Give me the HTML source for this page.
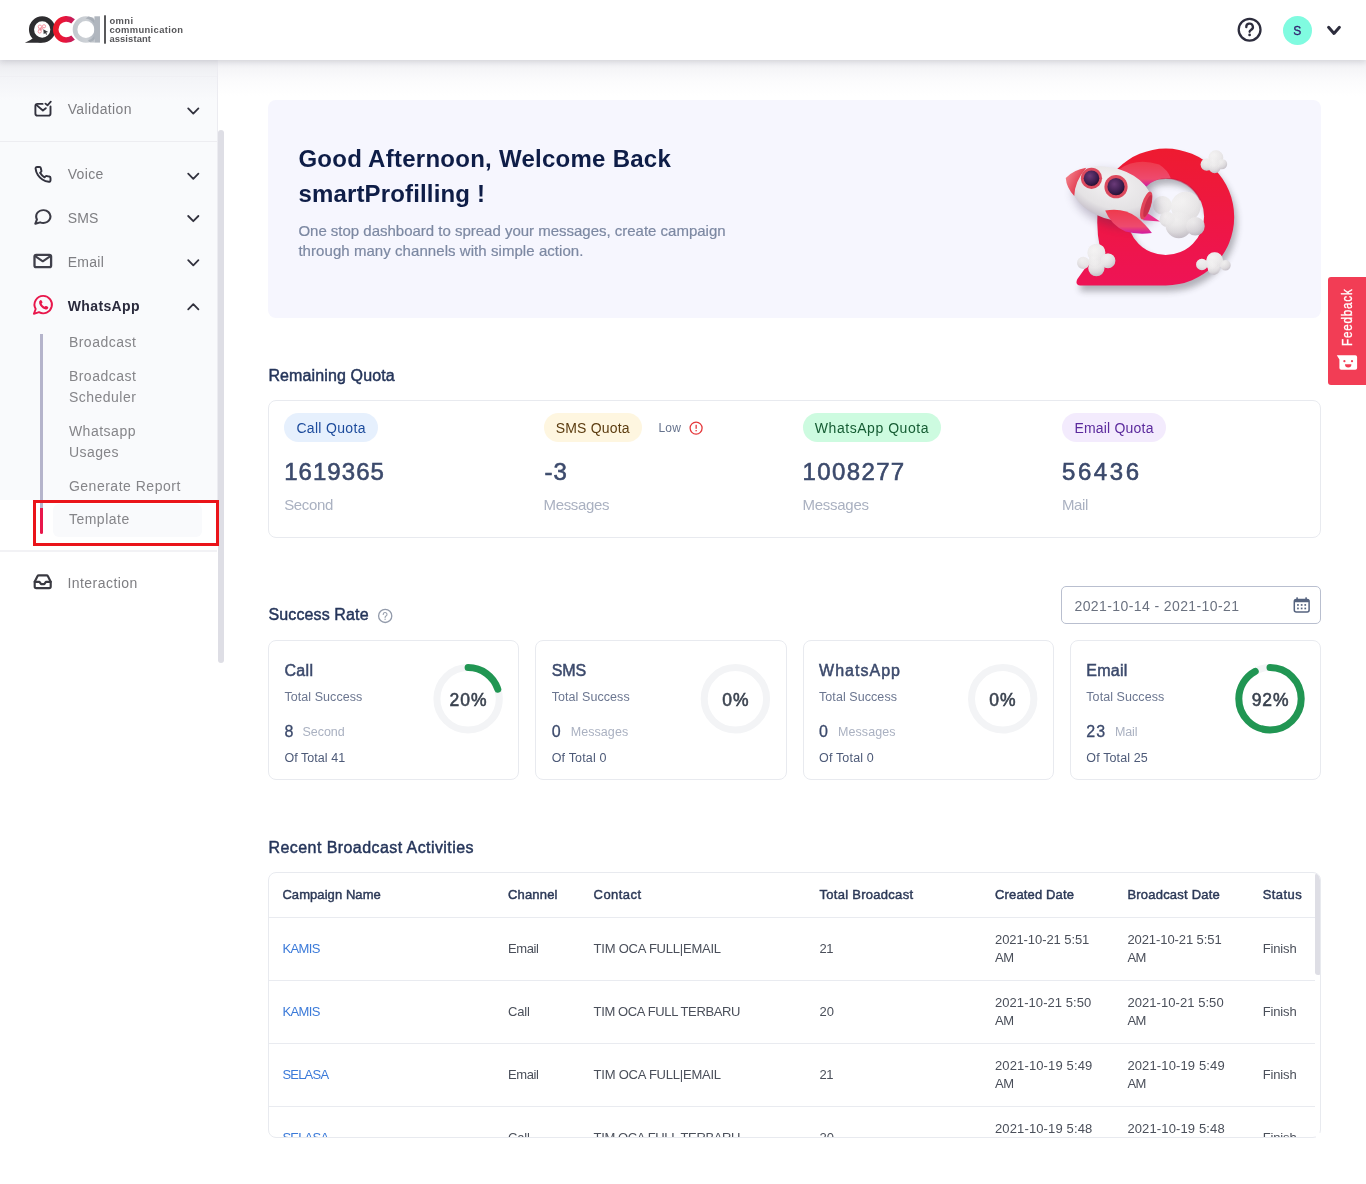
<!DOCTYPE html>
<html lang="en">
<head>
<meta charset="utf-8">
<title>OCA - Omni Communication Assistant</title>
<style>
*{box-sizing:border-box;margin:0;padding:0}
html,body{width:1366px;height:1184px;overflow:hidden;background:#fff}
body{font-family:"Liberation Sans",Arial,sans-serif;color:#2d3a5a;position:relative;font-size:14px}
.t{position:absolute;z-index:4;white-space:nowrap;line-height:1}
svg{position:absolute;overflow:visible}
/* header */
#hdr{position:absolute;left:0;top:0;width:1366px;height:60px;background:#fff;box-shadow:0 2px 6px rgba(30,30,50,.14);z-index:10}
#hdr .t{z-index:11}
#hdrshade{position:absolute;left:0;top:60px;width:1366px;height:36px;background:linear-gradient(#f1f1f4,#fbfbfc 55%,#fff);z-index:1}
#avatar{position:absolute;left:1282.8px;top:15.8px;width:29.4px;height:29.4px;border-radius:50%;background:#80fbe0;z-index:11}
/* sidebar */
#side{position:absolute;left:0;top:60px;width:218px;height:440px;background:#f9fafc;border-right:1px solid #ececf1;z-index:2}
#sideshade{position:absolute;left:0;top:60px;width:217px;height:40px;background:linear-gradient(#ebebef,#f3f4f7 42%,#f9fafc);z-index:3}
.sdiv{position:absolute;left:0;width:217px;height:1px;background:#ededf1;z-index:3}
#tree{position:absolute;left:40px;top:334px;width:3px;height:174px;background:#b5b4cb;z-index:4}
#treeact{position:absolute;left:40px;top:508px;width:3px;height:26px;background:#e8174b;border-radius:0 0 2px 2px;z-index:4}
#tplhl{position:absolute;left:53px;top:503.5px;width:149px;height:33.5px;border-radius:6px;background:#f9fafc;z-index:3}
#redbox{position:absolute;left:33px;top:500px;width:186px;height:46px;border:3px solid #ea141a;z-index:6}
#sbar{position:absolute;left:218px;top:130px;width:6px;height:532.5px;border-radius:3px;background:#dedee5;z-index:5}
/* main */
#banner{position:absolute;left:268px;top:100px;width:1053px;height:218px;border-radius:8px;background:#f6f6fe;z-index:2}
.card{position:absolute;border:1px solid #e8eaef;border-radius:8px;background:#fff;z-index:2}
.pill{position:absolute;top:413px;height:29px;border-radius:15px;z-index:3}
#date{position:absolute;left:1061px;top:586px;width:260px;height:37.5px;border:1px solid #b9bfcf;border-radius:5px;background:#fff;z-index:3}
#tbl{position:absolute;left:268px;top:872px;width:1053px;height:266px;border:1px solid #e8eaef;border-radius:8px;background:#fff;z-index:2;overflow:hidden}
#tbl .ln{position:absolute;left:0;width:1046px;height:1px;background:#e9ebf0}
#tbl .sb{position:absolute;left:1046px;top:0;width:5.5px;height:102px;border-radius:3px;background:#dedee5}
#fb{position:absolute;left:1328px;top:276.5px;width:38px;height:108.5px;background:#f23d55;border-radius:3px 0 0 3px;z-index:8}
#fbt{position:absolute;left:1339.8px;top:345.5px;width:60px;height:13px;transform-origin:0 0;transform:rotate(-90deg) scaleX(.78);font-size:15px;line-height:13px;color:#fff;white-space:nowrap;z-index:9;letter-spacing:1px;-webkit-text-stroke:.3px #fff}
</style>
</head>
<body>
<div id="wrap" style="position:absolute;left:0;top:0;width:1366px;height:1184px;will-change:transform">
<div id="hdr">
<svg id="logo" style="left:0;top:0;z-index:11" width="200" height="60" viewBox="0 0 200 60">
<defs>
<linearGradient id="gC" x1="0" y1="0" x2="1" y2="0"><stop offset="0" stop-color="#ea1a2b"/><stop offset=".5" stop-color="#e8153c"/><stop offset="1" stop-color="#c21d5c"/></linearGradient>
<linearGradient id="gA" x1="0" y1="0" x2="1" y2="0"><stop offset="0" stop-color="#c4c9cf"/><stop offset=".55" stop-color="#cdd1d6"/><stop offset="1" stop-color="#a7aeb8"/></linearGradient>
</defs>
<path d="M24.900 42.700 L42.200 42.700 L34.500 37 Q31 40.300 24.900 42.700z" fill="#2e2d30"/>
<circle cx="42.200" cy="29.500" r="10.700" fill="none" stroke="#2e2d30" stroke-width="5.100"/>
<g stroke="#f2798a" stroke-width=".75" fill="none"><circle cx="39.900" cy="26.700" r="1.700"/><circle cx="44" cy="26.300" r="1.600"/><circle cx="39.700" cy="31.500" r="1.600"/><circle cx="41.300" cy="29" r="1"/><path d="M41.500 29.200 L38.200 29.100 M42 28.500 L43.300 27.500"/></g>
<path d="M43.300 29.300 L48.200 32 L46.100 32.400 L47.100 34.300 L46.100 34.800 L45.200 32.900 L43.700 34.200z" fill="#3a393c"/>
<path d="M73.100 21.300 A10.600 10.600 0 1 0 73.100 37.600" fill="none" stroke="url(#gC)" stroke-width="5.600"/>
<circle cx="85.900" cy="29.500" r="10.850" fill="none" stroke="url(#gA)" stroke-width="4.700"/>
<path d="M85.500 18.600 L88.500 16.400 L93.500 17.800 L94.400 23.500 Q91 19 85.500 18.600z" fill="#a3a9b2" opacity=".8"/>
<path d="M88 40.300 Q92 39.500 94.400 36 L94.400 42.600 L90 42.600z" fill="#a3a9b2" opacity=".7"/>
<rect x="94.400" y="16.300" width="5.600" height="26.300" fill="#b0b6be"/>
<rect x="104" y="15.300" width="2" height="28.400" fill="#59595b"/>
</svg>
<svg style="left:1230px;top:10px;z-index:11" width="120" height="40" viewBox="1230 10 120 40">
<circle cx="1249.6" cy="29.7" r="10.9" fill="none" stroke="#2d2d3d" stroke-width="2.3"/>
<path d="M1246.3 27.2 A3.3 3.3 0 1 1 1251 29.900 Q1249.6 30.700 1249.6 31.800" fill="none" stroke="#2d2d3d" stroke-width="2.3" stroke-linecap="round"/>
<circle cx="1249.6" cy="34.900" r="1.35" fill="#2d2d3d"/>
<polyline points="1328.6,27.3 1334,33.4 1339.4,27.3" fill="none" stroke="#2d2d3d" stroke-width="3" stroke-linecap="round" stroke-linejoin="round"/>
</svg>
<div id="avatar"></div>
</div>
<div id="hdrshade"></div>
<div id="side"></div>
<div id="sideshade"></div>
<div class="sdiv" style="top:76px;background:#f0f0f4"></div>
<div class="sdiv" style="top:141px"></div>
<div class="sdiv" style="top:550px;height:2px;background:#f2f2f5"></div>
<div id="tree"></div><div id="treeact"></div>
<div id="tplhl"></div>
<div id="redbox"></div>
<div id="sbar"></div>
<svg style="left:0;top:60px;z-index:4" width="230" height="560" viewBox="0 60 230 560">
<g fill="none" stroke="#32323e" stroke-width="1.8" stroke-linecap="round" stroke-linejoin="round">
<polyline points="188.2,108.4 193.3,113.6 198.4,108.4"/><polyline points="188.2,173.6 193.3,178.79999999999998 198.4,173.6"/><polyline points="188.2,216.0 193.3,221.2 198.4,216.0"/><polyline points="188.2,260.2 193.3,265.40000000000003 198.4,260.2"/><polyline points="188.2,309.40000000000003 193.3,304.20000000000005 198.4,309.40000000000003"/></g>
<g fill="none" stroke="#32323e" stroke-width="2" stroke-linecap="round" stroke-linejoin="round">
<!-- validation -->
<path d="M42.600 103.900 H37.600 a2.200 2.200 0 0 0 -2.200 2.200 V113.400 a2.200 2.200 0 0 0 2.200 2.200 H48.300 a2.200 2.200 0 0 0 2.200 -2.200 V106.400" stroke-width="1.900"/>
<polyline points="36.300,104.900 42.900,110.500 45.800,108.200" stroke-width="1.900"/>
<polyline points="45.400,103.600 47.500,105.300 50.800,101.600" stroke-width="1.800"/>
<!-- voice -->
<g transform="translate(34.0,165.4) scale(.75)"><path stroke-width="2.6" d="M22 16.92v3a2 2 0 0 1-2.18 2 19.79 19.79 0 0 1-8.63-3.07 19.5 19.5 0 0 1-6-6 19.79 19.79 0 0 1-3.07-8.67A2 2 0 0 1 4.11 2h3a2 2 0 0 1 2 1.72 12.84 12.84 0 0 0 .7 2.81 2 2 0 0 1-.45 2.11L8.09 9.91a16 16 0 0 0 6 6l1.27-1.27a2 2 0 0 1 2.11-.45 12.84 12.84 0 0 0 2.81.7A2 2 0 0 1 22 16.92z"/></g>
<!-- sms -->
<g transform="translate(32.8,207.8) scale(.84,.76)" stroke="#3a3a45"><path stroke-width="2.5" d="M21 11.5a8.38 8.38 0 0 1-.9 3.8 8.5 8.5 0 0 1-7.6 4.7 8.38 8.38 0 0 1-3.8-.9L3 21l1.9-5.700a8.38 8.38 0 0 1-.9-3.8 8.500 8.500 0 0 1 4.7-7.6 8.38 8.38 0 0 1 3.8-.9h.5a8.48 8.48 0 0 1 8 8v.5z"/></g>
<!-- email -->
<rect x="34.5" y="254.8" width="16.6" height="12.4" rx="1.8" stroke="#40404b" stroke-width="2.300"/>
<polyline points="35.2,256.200 42.8,261.300 50.4,256.200" stroke="#40404b" stroke-width="2.100"/>
<!-- whatsapp -->
<path stroke="#e8174b" stroke-width="1.9" d="M43.3 295.9 a8.7 8.7 0 1 1 -4.3 16.3 L33.9 313.8 L35.7 309 A8.7 8.7 0 0 1 43.300 295.9z"/>
<path fill="#e8174b" stroke="none" d="M40.2 300.2 q.9-.5 1.400.4 l.8 1.500 q.3.700-.4 1.200 l-.5.500 q1 2 3 3 l.6-.600 q.5-.500 1.200-.2 l1.500.800 q.8.500.3 1.400 q-1 1.700-3.100 1 q-4.300-1.500-5.800-5.800 q-.6-2.100 1-3.200z"/>
<!-- interaction -->
<g transform="translate(33.100,572.2) scale(.8)" stroke="#3a3a42"><polyline stroke-width="2.7" points="22 12 16 12 14 15 10 15 8 12 2 12"/><path stroke-width="2.7" d="M5.45 5.11L2 12v6a2 2 0 0 0 2 2h16a2 2 0 0 0 2-2v-6l-3.45-6.890A2 2 0 0 0 16.76 4H7.24a2 2 0 0 0-1.79 1.110z"/></g>
</g>
</svg>
<div id="banner"></div>
<svg style="left:1040px;top:130px;z-index:3" width="220" height="180" viewBox="1040 130 220 180">
<defs>
<linearGradient id="rg" x1="0" y1="0" x2="0" y2="1"><stop offset="0" stop-color="#ee1b30"/><stop offset="1" stop-color="#ee1356"/></linearGradient>
<radialGradient id="cg" cx=".42" cy=".25" r=".85"><stop offset="0" stop-color="#f3f2f2"/><stop offset=".55" stop-color="#e4e2e3"/><stop offset="1" stop-color="#b9b3bd"/></radialGradient>
<radialGradient id="ch" cx=".4" cy=".3" r=".7"><stop offset="0" stop-color="#f7f6f6"/><stop offset=".7" stop-color="#eceaeb" stop-opacity=".6"/><stop offset="1" stop-color="#d5d1d6" stop-opacity="0"/></radialGradient>
<radialGradient id="bg" cx=".45" cy=".3" r=".75"><stop offset="0" stop-color="#f4f3f4"/><stop offset=".65" stop-color="#e4e2e4"/><stop offset="1" stop-color="#bdb6c2"/></radialGradient>
<radialGradient id="wg" cx=".4" cy=".35" r=".7"><stop offset="0" stop-color="#6a3a78"/><stop offset=".7" stop-color="#3a1c4c"/><stop offset="1" stop-color="#22102e"/></radialGradient>
<linearGradient id="fg" x1="0" y1="0" x2="0" y2="1"><stop offset="0" stop-color="#ee3a4c"/><stop offset=".7" stop-color="#ee4a6e"/><stop offset="1" stop-color="#d21aa0"/></linearGradient>
<linearGradient id="ng" x1="0" y1="0" x2="1" y2=".3"><stop offset="0" stop-color="#f58a93"/><stop offset="1" stop-color="#e23a4e"/></linearGradient>
<filter id="rs" x="-20%" y="-20%" width="150%" height="150%"><feGaussianBlur stdDeviation="3.2"/></filter>
<filter id="cs" x="-20%" y="-20%" width="140%" height="140%"><feGaussianBlur stdDeviation=".5"/></filter>
<filter id="bs" x="-30%" y="-30%" width="160%" height="160%"><feGaussianBlur stdDeviation="5"/></filter>
</defs>
<path d="M1097.4 217.0 A68.4 68.4 0 1 1 1165.8 285.4 L1080.3 285.6 Q1074.6 284.9 1077.4 279.0 L1099.9 247.6 Q1096.7 233.1 1097.4 217.0z M1127.3 216.6 A38.4 38.4 0 1 0 1204.1 216.6 A38.4 38.4 0 1 0 1127.3 216.6z" fill="#2a2a33" fill-rule="evenodd" opacity=".33" transform="translate(3,6)" filter="url(#rs)"/>
<path d="M1097.4 217.0 A68.4 68.4 0 1 1 1165.8 285.4 L1080.3 285.6 Q1074.6 284.9 1077.4 279.0 L1099.9 247.6 Q1096.7 233.1 1097.4 217.0z M1127.3 216.6 A38.4 38.4 0 1 0 1204.1 216.6 A38.4 38.4 0 1 0 1127.3 216.6z" fill="url(#rg)" fill-rule="evenodd"/>
<path d="M1127.3 216.6 A38.4 38.4 0 0 1 1165.7 178.2 A38.4 38.4 0 0 1 1200.26 200.088" fill="none" stroke="#c80f3c" stroke-width="1.6" opacity=".5"/>
<g filter="url(#cs)"><path d="M1200.6 164.6 a6.1 6.1 0 1 0 12.2 0 a6.1 6.1 0 1 0 -12.2 0z M1208.5 157.7 a7.4 7.4 0 1 0 14.8 0 a7.4 7.4 0 1 0 -14.8 0z M1216.8 164.1 a5.2 5.2 0 1 0 10.4 0 a5.2 5.2 0 1 0 -10.4 0z M1208.9 167.4 a5.8 5.8 0 1 0 11.6 0 a5.8 5.8 0 1 0 -11.6 0z M1208.4 163.0 a5.5 5.5 0 1 0 11.0 0 a5.5 5.5 0 1 0 -11.0 0z " fill="url(#cg)"/><circle cx="1206.7" cy="164.6" r="6.1" fill="url(#ch)" opacity=".55"/><circle cx="1215.9" cy="157.7" r="7.4" fill="url(#ch)" opacity=".55"/><circle cx="1222.0" cy="164.1" r="5.2" fill="url(#ch)" opacity=".55"/><circle cx="1214.7" cy="167.4" r="5.8" fill="url(#ch)" opacity=".55"/><circle cx="1213.9" cy="163.0" r="5.5" fill="url(#ch)" opacity=".55"/></g>
<g filter="url(#cs)"><path d="M1077.1 262.9 a6.1 6.1 0 1 0 12.2 0 a6.1 6.1 0 1 0 -12.2 0z M1087.4 252.7 a9.0 9.0 0 1 0 18.0 0 a9.0 9.0 0 1 0 -18.0 0z M1100.6 260.8 a7.4 7.4 0 1 0 14.8 0 a7.4 7.4 0 1 0 -14.8 0z M1088.3 268.2 a8.1 8.1 0 1 0 16.2 0 a8.1 8.1 0 1 0 -16.2 0z M1088.4 261.3 a6.4 6.4 0 1 0 12.8 0 a6.4 6.4 0 1 0 -12.8 0z " fill="url(#cg)"/><circle cx="1083.2" cy="262.9" r="6.1" fill="url(#ch)" opacity=".55"/><circle cx="1096.4" cy="252.7" r="9.0" fill="url(#ch)" opacity=".55"/><circle cx="1108.0" cy="260.8" r="7.4" fill="url(#ch)" opacity=".55"/><circle cx="1096.4" cy="268.2" r="8.1" fill="url(#ch)" opacity=".55"/><circle cx="1094.8" cy="261.3" r="6.4" fill="url(#ch)" opacity=".55"/></g>
<g filter="url(#cs)"><path d="M1196.1 264.5 a5.8 5.8 0 1 0 11.6 0 a5.8 5.8 0 1 0 -11.6 0z M1206.2 260.8 a8.5 8.5 0 1 0 17.0 0 a8.5 8.5 0 1 0 -17.0 0z M1220.3 265.3 a5.2 5.2 0 1 0 10.4 0 a5.2 5.2 0 1 0 -10.4 0z M1207.8 268.8 a6.1 6.1 0 1 0 12.2 0 a6.1 6.1 0 1 0 -12.2 0z M1206.5 265.0 a5.8 5.8 0 1 0 11.6 0 a5.8 5.8 0 1 0 -11.6 0z " fill="url(#cg)"/><circle cx="1201.9" cy="264.5" r="5.8" fill="url(#ch)" opacity=".55"/><circle cx="1214.7" cy="260.8" r="8.5" fill="url(#ch)" opacity=".55"/><circle cx="1225.5" cy="265.3" r="5.2" fill="url(#ch)" opacity=".55"/><circle cx="1213.9" cy="268.8" r="6.1" fill="url(#ch)" opacity=".55"/><circle cx="1212.3" cy="265.0" r="5.8" fill="url(#ch)" opacity=".55"/></g>
<g filter="url(#cs)"><path d="M1153.1 205.4 a9.3 9.3 0 1 0 18.6 0 a9.3 9.3 0 1 0 -18.6 0z M1171.0 206.5 a14.8 14.8 0 1 0 29.6 0 a14.8 14.8 0 1 0 -29.6 0z M1165.6 225.0 a13.2 13.2 0 1 0 26.4 0 a13.2 13.2 0 1 0 -26.4 0z M1186.1 226.3 a9.3 9.3 0 1 0 18.6 0 a9.3 9.3 0 1 0 -18.6 0z M1159.5 219.4 a7.7 7.7 0 1 0 15.4 0 a7.7 7.7 0 1 0 -15.4 0z " fill="url(#cg)"/><circle cx="1162.4" cy="205.4" r="9.3" fill="url(#ch)" opacity=".55"/><circle cx="1185.8" cy="206.5" r="14.8" fill="url(#ch)" opacity=".55"/><circle cx="1178.8" cy="225.0" r="13.2" fill="url(#ch)" opacity=".55"/><circle cx="1195.4" cy="226.3" r="9.3" fill="url(#ch)" opacity=".55"/><circle cx="1167.2" cy="219.4" r="7.7" fill="url(#ch)" opacity=".55"/></g>
<ellipse cx="1115.7" cy="199.3" rx="44" ry="27" transform="rotate(17.5 1115.7 199.3)" fill="#3a2a50" opacity=".28" filter="url(#bs)"/>
<path d="M1119.7 169.0 Q1136.6 157.4 1159.2 164.6 Q1168.0 170.3 1170.8 178.3 Q1157.6 176.7 1146.3 186.4z" fill="url(#fg)"/>
<path d="M1144.7 211.3 L1160.0 221.5 L1143.1 220.2z" fill="#e8308a"/>
<g transform="rotate(17.5 1111.7 193.6)">
<ellipse cx="1111.7" cy="193.6" rx="41" ry="25.5" fill="url(#bg)"/>
<path d="M1063.2 192.6 Q1067.7 182.6 1079.7 176.6 Q1072.7 193.6 1076.7 207.1 Q1066.7 201.6 1063.2 192.6z" fill="url(#ng)"/>
<ellipse cx="1148.2" cy="194.6" rx="4.6" ry="14.5" fill="#e2455a"/>
<ellipse cx="1149.7" cy="194.6" rx="2.8" ry="11.5" fill="#c8304a"/>
</g>
<circle cx="1091.5" cy="178.3" r="10.6" fill="#dc4a5e"/><circle cx="1091.5" cy="178.3" r="7.8" fill="url(#wg)"/>
<circle cx="1116.0" cy="186.7" r="11.6" fill="#dc4a5e"/><circle cx="1116.0" cy="186.7" r="8.6" fill="url(#wg)"/>
<path d="M1105.2 210.5 Q1123.7 207.3 1136.6 217.0 Q1146.3 225.0 1151.9 233.1 Q1136.6 234.7 1125.4 231.5 Q1110.9 225.0 1105.2 210.5z" fill="url(#fg)"/>
</svg>
<div class="card" style="left:268px;top:400px;width:1053px;height:138px"></div>
<div class="pill" style="left:284px;width:94px;background:#e6f0fd"></div>
<div class="pill" style="left:543.5px;width:98px;background:#fef6e0"></div>
<div class="pill" style="left:802.5px;width:138.2px;background:#cdfbe0"></div>
<div class="pill" style="left:1062px;width:104px;background:#f3ebfd"></div>
<svg style="left:680px;top:418px;z-index:4" width="30" height="20" viewBox="680 418 30 20">
<circle cx="696.100" cy="428.100" r="6" fill="none" stroke="#e5383b" stroke-width="1.3"/>
<rect x="695.5" y="424.800" width="1.3" height="4" fill="#e5383b"/><rect x="695.5" y="430" width="1.3" height="1.3" fill="#e5383b"/>
</svg>
<svg style="left:370px;top:605px;z-index:4" width="30" height="20" viewBox="370 605 30 20">
<circle cx="385.200" cy="615.9" r="6.600" fill="none" stroke="#939bab" stroke-width="1.300"/>
<path d="M383.200 614.500 A1.900 1.900 0 1 1 386 616.100 Q385.100 616.600 385.100 617.500" fill="none" stroke="#9aa1ae" stroke-width="1.100" stroke-linecap="round"/>
<circle cx="385.100" cy="619.200" r=".7" fill="#9aa1ae"/>
</svg>
<svg style="left:1290px;top:594px;z-index:4" width="24" height="22" viewBox="1290 594 24 22">
<rect x="1294.300" y="599.600" width="14.800" height="12.300" rx="2" fill="none" stroke="#55637f" stroke-width="1.500"/>
<rect x="1294.300" y="599.600" width="14.800" height="2.700" rx="1" fill="#55637f"/>
<rect x="1296.300" y="597.200" width="1.600" height="3.500" rx=".6" fill="#55637f"/><rect x="1305.300" y="597.200" width="1.600" height="3.500" rx=".6" fill="#55637f"/>
<g fill="#55637f"><rect x="1297.100" y="604.100" width="1.700" height="1.700"/><rect x="1300.800" y="604.100" width="1.700" height="1.700"/><rect x="1304.400" y="604.100" width="1.700" height="1.700"/><rect x="1297.100" y="607.600" width="1.700" height="1.700"/><rect x="1300.800" y="607.600" width="1.700" height="1.700"/><rect x="1304.400" y="607.600" width="1.700" height="1.700"/></g>
</svg>
<div class="card" style="left:268px;top:640px;width:251px;height:140px"></div>
<div class="card" style="left:535.3px;top:640px;width:251.4px;height:140px"></div>
<div class="card" style="left:803px;top:640px;width:251px;height:140px"></div>
<div class="card" style="left:1070px;top:640px;width:251px;height:140px"></div>
<svg style="left:420px;top:650px;z-index:3" width="900" height="100" viewBox="420 650 900 100"><circle cx="468.1" cy="698.8" r="31.2" fill="none" stroke="#f3f4f6" stroke-width="7"/><circle cx="468.1" cy="698.8" r="31.2" fill="none" stroke="#219653" stroke-width="7" stroke-linecap="round" stroke-dasharray="39.21 196.04" transform="rotate(-90 468.1 698.8)"/><circle cx="735.4" cy="698.8" r="31.2" fill="none" stroke="#f3f4f6" stroke-width="7"/><circle cx="1002.7" cy="698.8" r="31.2" fill="none" stroke="#f3f4f6" stroke-width="7"/><circle cx="1270" cy="698.8" r="31.2" fill="none" stroke="#f3f4f6" stroke-width="7"/><circle cx="1270" cy="698.8" r="31.2" fill="none" stroke="#219653" stroke-width="7" stroke-linecap="round" stroke-dasharray="180.35 196.04" transform="rotate(-90 1270 698.8)"/></svg>
<div id="date"></div>
<div id="tbl">
<div class="ln" style="top:44px"></div>
<div class="ln" style="top:107px"></div>
<div class="ln" style="top:170px"></div>
<div class="ln" style="top:233px"></div>
<div class="sb"></div>
<div class="t" id="t69" style="left:13.4px;top:69.3px;font-size:13px;color:#3b7ad9;letter-spacing:-0.62px;">KAMIS</div>
<div class="t" id="t70" style="left:238.9px;top:69.3px;font-size:13px;color:#4a4f5a;letter-spacing:-0.38px;">Email</div>
<div class="t" id="t71" style="left:324.6px;top:69.3px;font-size:13px;color:#4a4f5a;letter-spacing:-0.22px;">TIM OCA FULL|EMAIL</div>
<div class="t" id="t72" style="left:550.5px;top:69.3px;font-size:13px;color:#4a4f5a;letter-spacing:-0.50px;">21</div>
<div class="t" id="t73" style="left:726.0px;top:60.3px;font-size:13px;color:#4a4f5a;letter-spacing:-0.08px;">2021-10-21 5:51</div>
<div class="t" id="t74" style="left:726.0px;top:78.4px;font-size:13px;color:#4a4f5a;letter-spacing:-0.50px;">AM</div>
<div class="t" id="t75" style="left:858.4px;top:60.3px;font-size:13px;color:#4a4f5a;letter-spacing:-0.08px;">2021-10-21 5:51</div>
<div class="t" id="t76" style="left:858.4px;top:78.4px;font-size:13px;color:#4a4f5a;letter-spacing:-0.50px;">AM</div>
<div class="t" id="t77" style="left:993.7px;top:69.3px;font-size:13px;color:#4a4f5a;letter-spacing:-0.14px;">Finish</div>
<div class="t" id="t78" style="left:13.4px;top:132.3px;font-size:13px;color:#3b7ad9;letter-spacing:-0.62px;">KAMIS</div>
<div class="t" id="t79" style="left:238.9px;top:132.3px;font-size:13px;color:#4a4f5a;letter-spacing:-0.14px;">Call</div>
<div class="t" id="t80" style="left:324.6px;top:132.3px;font-size:13px;color:#4a4f5a;letter-spacing:-0.37px;">TIM OCA FULL TERBARU</div>
<div class="t" id="t81" style="left:550.5px;top:132.3px;font-size:13px;color:#4a4f5a;letter-spacing:0.03px;">20</div>
<div class="t" id="t82" style="left:726.0px;top:123.3px;font-size:13px;color:#4a4f5a;letter-spacing:0.06px;">2021-10-21 5:50</div>
<div class="t" id="t83" style="left:726.0px;top:141.4px;font-size:13px;color:#4a4f5a;letter-spacing:-0.50px;">AM</div>
<div class="t" id="t84" style="left:858.4px;top:123.3px;font-size:13px;color:#4a4f5a;letter-spacing:0.06px;">2021-10-21 5:50</div>
<div class="t" id="t85" style="left:858.4px;top:141.4px;font-size:13px;color:#4a4f5a;letter-spacing:-0.50px;">AM</div>
<div class="t" id="t86" style="left:993.7px;top:132.3px;font-size:13px;color:#4a4f5a;letter-spacing:-0.14px;">Finish</div>
<div class="t" id="t87" style="left:13.4px;top:195.3px;font-size:13px;color:#3b7ad9;letter-spacing:-0.78px;">SELASA</div>
<div class="t" id="t88" style="left:238.9px;top:195.3px;font-size:13px;color:#4a4f5a;letter-spacing:-0.38px;">Email</div>
<div class="t" id="t89" style="left:324.6px;top:195.3px;font-size:13px;color:#4a4f5a;letter-spacing:-0.22px;">TIM OCA FULL|EMAIL</div>
<div class="t" id="t90" style="left:550.5px;top:195.3px;font-size:13px;color:#4a4f5a;letter-spacing:-0.50px;">21</div>
<div class="t" id="t91" style="left:726.0px;top:186.3px;font-size:13px;color:#4a4f5a;letter-spacing:0.13px;">2021-10-19 5:49</div>
<div class="t" id="t92" style="left:726.0px;top:204.4px;font-size:13px;color:#4a4f5a;letter-spacing:-0.50px;">AM</div>
<div class="t" id="t93" style="left:858.4px;top:186.3px;font-size:13px;color:#4a4f5a;letter-spacing:0.13px;">2021-10-19 5:49</div>
<div class="t" id="t94" style="left:858.4px;top:204.4px;font-size:13px;color:#4a4f5a;letter-spacing:-0.50px;">AM</div>
<div class="t" id="t95" style="left:993.7px;top:195.3px;font-size:13px;color:#4a4f5a;letter-spacing:-0.14px;">Finish</div>
<div class="t" id="t96" style="left:13.4px;top:258.3px;font-size:13px;color:#3b7ad9;letter-spacing:-0.78px;">SELASA</div>
<div class="t" id="t97" style="left:238.9px;top:258.3px;font-size:13px;color:#4a4f5a;letter-spacing:-0.14px;">Call</div>
<div class="t" id="t98" style="left:324.6px;top:258.3px;font-size:13px;color:#4a4f5a;letter-spacing:-0.37px;">TIM OCA FULL TERBARU</div>
<div class="t" id="t99" style="left:550.5px;top:258.3px;font-size:13px;color:#4a4f5a;letter-spacing:0.03px;">20</div>
<div class="t" id="t100" style="left:726.0px;top:249.3px;font-size:13px;color:#4a4f5a;letter-spacing:0.13px;">2021-10-19 5:48</div>
<div class="t" id="t101" style="left:726.0px;top:267.4px;font-size:13px;color:#4a4f5a;letter-spacing:-0.50px;">AM</div>
<div class="t" id="t102" style="left:858.4px;top:249.3px;font-size:13px;color:#4a4f5a;letter-spacing:0.13px;">2021-10-19 5:48</div>
<div class="t" id="t103" style="left:858.4px;top:267.4px;font-size:13px;color:#4a4f5a;letter-spacing:-0.50px;">AM</div>
<div class="t" id="t104" style="left:993.7px;top:258.3px;font-size:13px;color:#4a4f5a;letter-spacing:-0.14px;">Finish</div>
</div>
<div style="position:absolute;left:1316px;top:1133px;width:7px;height:7px;background:#fff;z-index:5"></div>
<div id="fb"></div>
<div id="fbt">Feedback</div>
<svg style="left:1334px;top:352px;z-index:9" width="26" height="22" viewBox="1334 352 26 22">
<path d="M1336.800 355.300 H1355.300 a1.800 1.800 0 0 1 1.800 1.800 V368 a1.800 1.800 0 0 1 -1.800 1.800 H1341.200 a1.800 1.800 0 0 1 -1.800 -1.800 V359.500z" fill="#fff"/>
<circle cx="1344.400" cy="361.200" r="1.100" fill="#f23d55"/><circle cx="1352" cy="361.200" r="1.100" fill="#f23d55"/>
<path d="M1345 364.300 H1351.400 A3.200 3.200 0 0 1 1345 364.300z" fill="#f23d55"/>
</svg>
<div class="t" id="t0" style="left:67.7px;top:102.2px;font-size:14px;color:#7e7e82;letter-spacing:0.37px;">Validation</div>
<div class="t" id="t1" style="left:67.7px;top:167.3px;font-size:14px;color:#7e7e82;letter-spacing:0.34px;">Voice</div>
<div class="t" id="t2" style="left:67.7px;top:210.7px;font-size:14px;color:#7e7e82;letter-spacing:0.18px;">SMS</div>
<div class="t" id="t3" style="left:67.7px;top:255.0px;font-size:14px;color:#7e7e82;letter-spacing:0.27px;">Email</div>
<div class="t" id="t4" style="left:67.7px;top:298.6px;font-size:14px;color:#2a2a3c;font-weight:bold;letter-spacing:0.38px;">WhatsApp</div>
<div class="t" id="t5" style="left:67.4px;top:576.1px;font-size:14px;color:#7e7e82;letter-spacing:0.46px;">Interaction</div>
<div class="t" id="t6" style="left:68.9px;top:334.6px;font-size:14px;color:#858589;letter-spacing:0.49px;">Broadcast</div>
<div class="t" id="t7" style="left:68.9px;top:368.5px;font-size:14px;color:#858589;letter-spacing:0.49px;">Broadcast</div>
<div class="t" id="t8" style="left:68.9px;top:390.4px;font-size:14px;color:#858589;letter-spacing:0.49px;">Scheduler</div>
<div class="t" id="t9" style="left:68.9px;top:423.6px;font-size:14px;color:#858589;letter-spacing:0.51px;">Whatsapp</div>
<div class="t" id="t10" style="left:68.9px;top:445.0px;font-size:14px;color:#858589;letter-spacing:0.45px;">Usages</div>
<div class="t" id="t11" style="left:68.9px;top:479.1px;font-size:14px;color:#858589;letter-spacing:0.51px;">Generate Report</div>
<div class="t" id="t12" style="left:68.9px;top:512.1px;font-size:14px;color:#858589;letter-spacing:0.50px;">Template</div>
<div class="t" id="t13" style="left:109.4px;top:16.4px;font-size:9.4px;color:#555558;font-weight:bold;letter-spacing:0.40px;z-index:11;">omni</div>
<div class="t" id="t14" style="left:109.4px;top:25.4px;font-size:9.4px;color:#555558;font-weight:bold;letter-spacing:0.36px;z-index:11;">communication</div>
<div class="t" id="t15" style="left:109.4px;top:34.2px;font-size:9.4px;color:#555558;font-weight:bold;letter-spacing:0.11px;z-index:11;">assistant</div>
<div class="t" id="t16" style="left:1293.2px;top:24.8px;font-size:12px;color:#2f1a6b;-webkit-text-stroke:0.3px #2f1a6b;z-index:11;">S</div>
<div class="t" id="t17" style="left:298.4px;top:146.6px;font-size:24px;color:#0e1d47;font-weight:bold;letter-spacing:0.26px;">Good Afternoon, Welcome Back</div>
<div class="t" id="t18" style="left:298.4px;top:181.9px;font-size:24px;color:#0e1d47;font-weight:bold;letter-spacing:0.16px;">smartProfilling !</div>
<div class="t" id="t19" style="left:298.4px;top:222.6px;font-size:15px;color:#7c88a2;-webkit-text-stroke:0.2px #7c88a2;letter-spacing:-0.01px;">One stop dashboard to spread your messages, create campaign</div>
<div class="t" id="t20" style="left:298.4px;top:242.9px;font-size:15px;color:#7c88a2;-webkit-text-stroke:0.2px #7c88a2;letter-spacing:0.06px;">through many channels with simple action.</div>
<div class="t" id="t21" style="left:268.4px;top:368.0px;font-size:16px;color:#25355a;-webkit-text-stroke:0.45px #25355a;letter-spacing:0.13px;">Remaining Quota</div>
<div class="t" id="t22" style="left:268.5px;top:606.9px;font-size:16px;color:#25355a;-webkit-text-stroke:0.45px #25355a;letter-spacing:0.12px;">Success Rate</div>
<div class="t" id="t23" style="left:268.5px;top:839.7px;font-size:16px;color:#25355a;-webkit-text-stroke:0.45px #25355a;letter-spacing:0.43px;">Recent Broadcast Activities</div>
<div class="t" id="t24" style="left:296.4px;top:420.9px;font-size:14px;color:#1c4b9c;letter-spacing:0.32px;">Call Quota</div>
<div class="t" id="t25" style="left:555.7px;top:420.9px;font-size:14px;color:#5c3d10;letter-spacing:0.20px;">SMS Quota</div>
<div class="t" id="t26" style="left:814.8px;top:420.9px;font-size:14px;color:#155c33;letter-spacing:0.54px;">WhatsApp Quota</div>
<div class="t" id="t27" style="left:1074.4px;top:420.9px;font-size:14px;color:#5b2a9d;letter-spacing:0.20px;">Email Quota</div>
<div class="t" id="t28" style="left:658.4px;top:421.8px;font-size:12px;color:#66738d;letter-spacing:0.29px;">Low</div>
<div class="t" id="t29" style="left:284.2px;top:459.9px;font-size:24px;color:#3c4a6c;-webkit-text-stroke:0.6px #3c4a6c;letter-spacing:1.04px;">1619365</div>
<div class="t" id="t30" style="left:544.5px;top:459.9px;font-size:24px;color:#3c4a6c;-webkit-text-stroke:0.6px #3c4a6c;letter-spacing:1.00px;">-3</div>
<div class="t" id="t31" style="left:802.5px;top:459.9px;font-size:24px;color:#3c4a6c;-webkit-text-stroke:0.6px #3c4a6c;letter-spacing:1.38px;">1008277</div>
<div class="t" id="t32" style="left:1062.0px;top:459.9px;font-size:24px;color:#3c4a6c;-webkit-text-stroke:0.6px #3c4a6c;letter-spacing:2.56px;">56436</div>
<div class="t" id="t33" style="left:284.2px;top:497.1px;font-size:15px;color:#aab1c1;letter-spacing:-0.33px;">Second</div>
<div class="t" id="t34" style="left:543.5px;top:497.1px;font-size:15px;color:#aab1c1;letter-spacing:-0.34px;">Messages</div>
<div class="t" id="t35" style="left:802.5px;top:497.1px;font-size:15px;color:#aab1c1;letter-spacing:-0.27px;">Messages</div>
<div class="t" id="t36" style="left:1062.0px;top:497.1px;font-size:15px;color:#aab1c1;letter-spacing:-0.41px;">Mail</div>
<div class="t" id="t37" style="left:284.4px;top:662.7px;font-size:16px;color:#3c4a6c;-webkit-text-stroke:0.5px #3c4a6c;letter-spacing:0.38px;">Call</div>
<div class="t" id="t38" style="left:284.4px;top:690.6px;font-size:12.5px;color:#6b7690;letter-spacing:0.07px;">Total Success</div>
<div class="t" id="t39" style="left:284.4px;top:724.0px;font-size:16px;color:#3c4a6c;-webkit-text-stroke:0.3px #3c4a6c;">8</div>
<div class="t" id="t40" style="left:302.5px;top:726.3px;font-size:12.5px;color:#aab1c1;letter-spacing:-0.04px;">Second</div>
<div class="t" id="t41" style="left:284.4px;top:751.7px;font-size:12.5px;color:#4d5a78;letter-spacing:0.05px;">Of Total 41</div>
<div class="t" id="t42" style="left:551.7px;top:662.7px;font-size:16px;color:#3c4a6c;-webkit-text-stroke:0.5px #3c4a6c;letter-spacing:-0.09px;">SMS</div>
<div class="t" id="t43" style="left:551.7px;top:690.6px;font-size:12.5px;color:#6b7690;letter-spacing:0.07px;">Total Success</div>
<div class="t" id="t44" style="left:551.7px;top:724.0px;font-size:16px;color:#3c4a6c;-webkit-text-stroke:0.3px #3c4a6c;">0</div>
<div class="t" id="t45" style="left:570.7px;top:726.3px;font-size:12.5px;color:#aab1c1;letter-spacing:0.07px;">Messages</div>
<div class="t" id="t46" style="left:551.7px;top:751.7px;font-size:12.5px;color:#4d5a78;letter-spacing:0.17px;">Of Total 0</div>
<div class="t" id="t47" style="left:819.0px;top:662.7px;font-size:16px;color:#3c4a6c;-webkit-text-stroke:0.5px #3c4a6c;letter-spacing:1.03px;">WhatsApp</div>
<div class="t" id="t48" style="left:819.0px;top:690.6px;font-size:12.5px;color:#6b7690;letter-spacing:0.07px;">Total Success</div>
<div class="t" id="t49" style="left:819.0px;top:724.0px;font-size:16px;color:#3c4a6c;-webkit-text-stroke:0.3px #3c4a6c;">0</div>
<div class="t" id="t50" style="left:838.0px;top:726.3px;font-size:12.5px;color:#aab1c1;letter-spacing:0.07px;">Messages</div>
<div class="t" id="t51" style="left:819.0px;top:751.7px;font-size:12.5px;color:#4d5a78;letter-spacing:0.17px;">Of Total 0</div>
<div class="t" id="t52" style="left:1086.3px;top:662.7px;font-size:16px;color:#3c4a6c;-webkit-text-stroke:0.5px #3c4a6c;letter-spacing:0.25px;">Email</div>
<div class="t" id="t53" style="left:1086.3px;top:690.6px;font-size:12.5px;color:#6b7690;letter-spacing:0.07px;">Total Success</div>
<div class="t" id="t54" style="left:1086.3px;top:724.0px;font-size:16px;color:#3c4a6c;-webkit-text-stroke:0.3px #3c4a6c;letter-spacing:1.00px;">23</div>
<div class="t" id="t55" style="left:1115.0px;top:726.3px;font-size:12.5px;color:#aab1c1;letter-spacing:-0.14px;">Mail</div>
<div class="t" id="t56" style="left:1086.3px;top:751.7px;font-size:12.5px;color:#4d5a78;letter-spacing:0.13px;">Of Total 25</div>
<div class="t" id="t57" style="left:449.4px;top:691.6px;font-size:17.5px;color:#3a424f;-webkit-text-stroke:0.55px #3a424f;letter-spacing:1.13px;">20%</div>
<div class="t" id="t58" style="left:722.3px;top:691.6px;font-size:17.5px;color:#3a424f;-webkit-text-stroke:0.55px #3a424f;letter-spacing:1.00px;">0%</div>
<div class="t" id="t59" style="left:989.3px;top:691.6px;font-size:17.5px;color:#3a424f;-webkit-text-stroke:0.55px #3a424f;letter-spacing:1.00px;">0%</div>
<div class="t" id="t60" style="left:1251.7px;top:691.6px;font-size:17.5px;color:#3a424f;-webkit-text-stroke:0.55px #3a424f;letter-spacing:0.93px;">92%</div>
<div class="t" id="t61" style="left:1074.5px;top:599.1px;font-size:14px;color:#6b7280;letter-spacing:0.40px;">2021-10-14 - 2021-10-21</div>
<div class="t" id="t62" style="left:282.4px;top:887.9px;font-size:13px;color:#2c3957;-webkit-text-stroke:0.45px #2c3957;letter-spacing:0.07px;">Campaign Name</div>
<div class="t" id="t63" style="left:507.9px;top:887.9px;font-size:13px;color:#2c3957;-webkit-text-stroke:0.45px #2c3957;letter-spacing:0.19px;">Channel</div>
<div class="t" id="t64" style="left:593.6px;top:887.9px;font-size:13px;color:#2c3957;-webkit-text-stroke:0.45px #2c3957;letter-spacing:0.45px;">Contact</div>
<div class="t" id="t65" style="left:819.5px;top:887.9px;font-size:13px;color:#2c3957;-webkit-text-stroke:0.45px #2c3957;letter-spacing:0.28px;">Total Broadcast</div>
<div class="t" id="t66" style="left:995.0px;top:887.9px;font-size:13px;color:#2c3957;-webkit-text-stroke:0.45px #2c3957;letter-spacing:0.15px;">Created Date</div>
<div class="t" id="t67" style="left:1127.4px;top:887.9px;font-size:13px;color:#2c3957;-webkit-text-stroke:0.45px #2c3957;letter-spacing:0.21px;">Broadcast Date</div>
<div class="t" id="t68" style="left:1262.7px;top:887.9px;font-size:13px;color:#2c3957;-webkit-text-stroke:0.45px #2c3957;letter-spacing:0.43px;">Status</div>
</div>
</body>
</html>
